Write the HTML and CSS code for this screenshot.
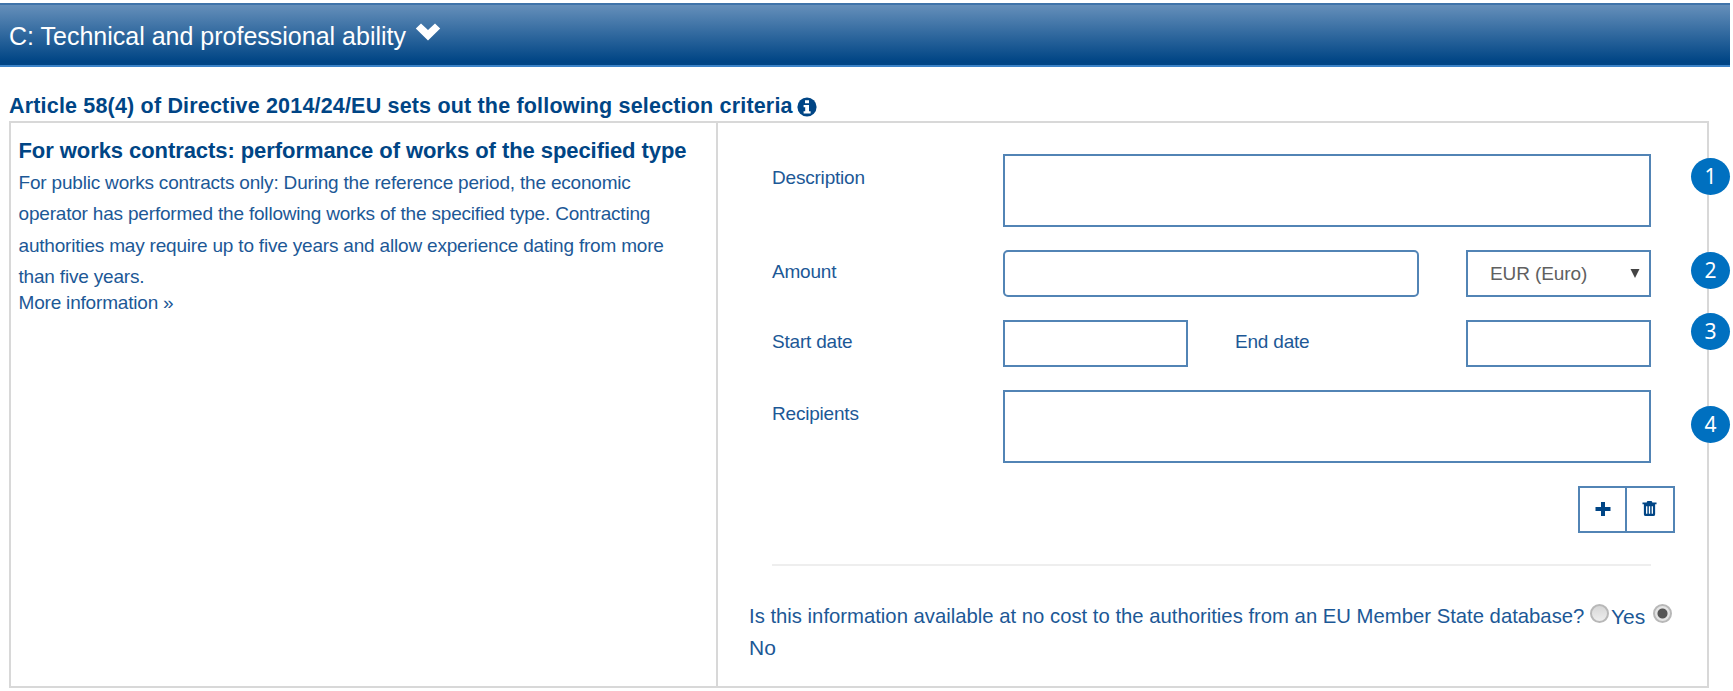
FILE: index.html
```html
<!DOCTYPE html>
<html lang="en">
<head>
<meta charset="utf-8">
<title>Technical and professional ability</title>
<link rel="stylesheet" href="styles.css">
</head>
<body>
<main class="page">
  <header class="panel-heading">
    <h1 class="panel-title">C: Technical and professional ability</h1>
    <svg class="chevron" viewBox="0 0 26 18"><path d="M.8 5.500 6 .5 13 7 20 .5 25.200 5.500 13 17.500Z"/></svg>
  </header>
  <h2 class="intro"><span class="intro-text">Article 58(4) of Directive 2014/24/EU sets out the following selection criteria</span>
    <svg class="info" viewBox="0 0 20 20"><circle cx="10" cy="10" r="9.6"/><path d="M8 3.2h4v3H8zM6.6 8h5.4v6.2h1.6v2.2H6.6v-2.2h1.6v-4H6.6z"/></svg>
  </h2>
  <div class="criteria">
    <section class="about">
      <h3 class="about-title">For works contracts: performance of works of the specified type</h3>
      <p class="about-text">For public works contracts only: During the reference period, the economic<br>operator has performed the following works of the specified type. Contracting<br>authorities may require up to five years and allow experience dating from more<br>than five years.</p>
      <a class="more">More information »</a>
    </section>
    <section class="answers">
      <form class="fields">
        <label class="label tall">Description</label><textarea class="field wide area"></textarea>
        <label class="label">Amount</label><input class="field amount"><div class="field select"><span>EUR (Euro)</span><svg class="caret" viewBox="0 0 10 10"><path d="M0 0h10L5 10z"/></svg></div>
        <label class="label">Start date</label><input class="field start"><label class="label end-label">End date</label><input class="field end">
        <label class="label tall">Recipients</label><textarea class="field wide area"></textarea>
      </form>
      <div class="buttons">
        <button class="button" aria-label="Add"><svg class="plus" viewBox="0 0 16 16"><path d="M6 1h4v5h5.500v4H10v5H6v-5H.5V6H6z"/></svg></button>
        <button class="button" aria-label="Delete"><svg class="trash" viewBox="0 0 16 18"><path fill-rule="evenodd" d="M5 2.500Q5 1 6.500 1h3Q11 1 11 2.500h4.500v2H.5v-2zM2 4.500h12V15q0 2-2 2H4q-2 0-2-2zM4.300 6.500V14.500h1.400V6.500zm3 0V14.500h1.400V6.500zm3 0V14.500h1.400V6.500z"/></svg></button>
      </div>
      <hr class="rule">
      <div class="question">
        <div class="question-line"><span class="question-text">Is this information available at no cost to the authorities from an EU Member State database?</span><span class="radio"></span><span class="yes">Yes</span><span class="radio checked"></span></div>
        <div class="question-line no">No</div>
      </div>
    </section>
  </div>
  <span class="badge one">1</span>
  <span class="badge two">2</span>
  <span class="badge three">3</span>
  <span class="badge four">4</span>
</main>
</body>
</html>
```
FILE: styles.css
```css
* { box-sizing: border-box; }
body { margin: 0; background: #fff; color: #1c5896; font-family: "Liberation Sans", Arial, sans-serif; }
.page { position: relative; width: 1733px; height: 691px; padding-top: 3px; overflow: hidden; white-space: nowrap; }
.panel-heading { display: flex; width: 1730px; height: 64px; padding-left: 9px; border-top: 2px solid #3f73a9; border-bottom: 2px solid #3b83c8; background: linear-gradient(#658fba, #004585 94%); color: #fff; }
.panel-title { width: 406px; margin: 0; font-size: 25px; font-weight: 400; line-height: 62px; }
.chevron { width: 26px; height: 18px; margin-top: 18px; fill: #fff; }
.intro { display: flex; align-items: center; height: 29px; margin: 25px 0 0 9px; color: #004585; font-size: 21.5px; line-height: 29px; letter-spacing: .18px; }
.intro-text { width: 788px; }
.info { width: 20px; height: 20px; }
.info circle { fill: #004585; }
.info path { fill: #fff; }
.criteria { display: grid; grid-template-columns: 707px 1fr; width: 1700px; height: 567px; margin-left: 9px; border: 2px solid #d8d8d8; }
.about { padding: 13px 0 0 7.500px; border-right: 2px solid #d8d8d8; }
.about-title { margin: 0; color: #004585; font-size: 22px; line-height: 30px; letter-spacing: -.07px; }
.about-text { margin: 1px 0 0; font-size: 19px; line-height: 31.3px; letter-spacing: -.19px; }
.more { display: block; font-size: 19px; line-height: 22px; letter-spacing: -.19px; }
.answers { padding: 31px 0 0 31px; }
.fields { display: grid; grid-template-columns: 231px 185px 47px 184px 47px 185px; grid-template-rows: 73px 47px 47px 73px; row-gap: 23px; width: 879px; margin-left: 23px; }
.label { grid-column: 1; padding-top: 11px; font-size: 19px; line-height: 22px; letter-spacing: -.2px; }
.tall { padding-top: 13px; }
.field { width: 100%; height: 100%; margin: 0; padding: 0; border: 2px solid #5284b5; border-radius: 0; background: #fff; outline: 0; resize: none; }
.wide { grid-column: 2 / -1; }
.amount { grid-column: 2 / 5; border-radius: 5px; }
.select { grid-column: 6; display: flex; align-items: center; justify-content: space-between; padding: 0 9px 0 22px; color: #606060; font-size: 19px; letter-spacing: -.1px; }
.caret { width: 10px; height: 9px; fill: #444; }
.start { grid-column: 2; }
.end-label { grid-column: 4; }
.end { grid-column: 6; }
.buttons { display: flex; width: 97px; height: 47px; margin: 23px 0 0 829px; border: 2px solid #5284b5; }
.button { display: flex; flex: none; width: 45px; align-items: center; justify-content: center; padding: 0 0 2px; border: 0; background: #fff; }
.button + .button { width: 48px; padding-right: 2px; border-left: 2px solid #5284b5; }
.plus { width: 16px; height: 16px; fill: #004585; }
.trash { width: 15px; height: 17px; fill: #004585; }
.rule { width: 879px; height: 2px; margin: 31px 0 0 23px; border: 0; background: #eee; }
.question { margin-top: 35px; font-size: 20.3px; }
.question-line { display: flex; height: 31px; line-height: 31px; }
.question-text { width: 841px; }
.radio { width: 19px; height: 19px; margin-top: 3px; border: 2px solid #b8b8b8; border-radius: 50%; background: linear-gradient(#d6d6d6, #eee); }
.checked { background: radial-gradient(circle, #555 0 4.500px, #e4e4e4 5.500px); }
.yes { width: 44px; padding-left: 2px; font-size: 21px; }
.no { font-size: 21px; }
.badge { position: absolute; left: 1691px; width: 39px; height: 37px; border-radius: 50%; background: #0070c0; color: #fff; font: 21px/36px "Noto Sans", sans-serif; text-align: center; }
.one { top: 158px; }
.two { top: 252px; }
.three { top: 313px; }
.four { top: 406px; }
```
